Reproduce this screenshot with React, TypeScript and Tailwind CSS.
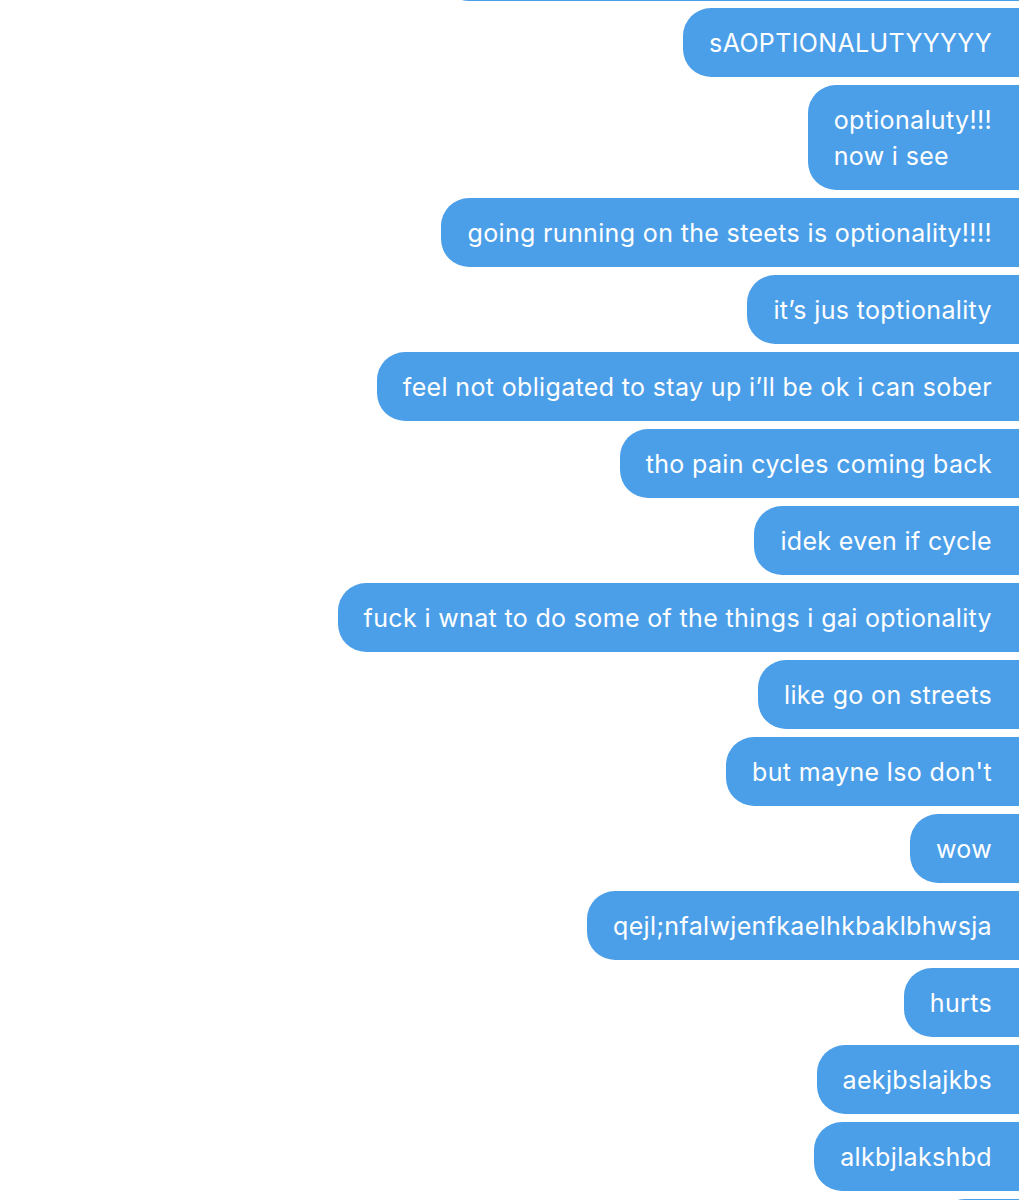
const messages: string[][] = [
  ["going running on the steets is optionality!!!!"],
  ["sAOPTIONALUTYYYYY"],
  ["optionaluty!!!", "now i see"],
  ["going running on the steets is optionality!!!!"],
  ["it\u2019s jus toptionality"],
  ["feel not obligated to stay up i\u2019ll be ok i can sober"],
  ["tho pain cycles coming back"],
  ["idek even if cycle"],
  ["fuck i wnat to do some of the things i gai optionality"],
  ["like go on streets"],
  ["but mayne lso don't"],
  ["wow"],
  ["qejl;nfalwjenfkaelhkbaklbhwsja"],
  ["hurts"],
  ["aekjbslajkbs"],
  ["alkbjlakshbd"],
  ["ok"],
];

function Bubble({ lines, first }: { lines: string[]; first?: boolean }) {
  return (
    <div
      className={`bg-[#4b9ee8] text-white rounded-l-[28px] pl-[26px] pr-[27px] py-[16.5px] text-[25px] leading-[36px] tracking-[0.35px] ${
        first ? "-mt-[68px] -mb-[1px]" : ""
      }`}
    >
      {lines.map((l, i) => (
        <div key={i} className="whitespace-pre">
          {l}
        </div>
      ))}
    </div>
  );
}

export default function App() {
  return (
    <div
      className="w-[1035px] h-[1200px] overflow-hidden bg-white"
      style={{ fontFamily: "Inter, 'Liberation Sans', sans-serif" }}
    >
      <div className="flex flex-col items-end gap-[8px] pr-[16px]">
        {messages.map((m, i) => (
          <Bubble key={i} lines={m} first={i === 0} />
        ))}
      </div>
    </div>
  );
}
